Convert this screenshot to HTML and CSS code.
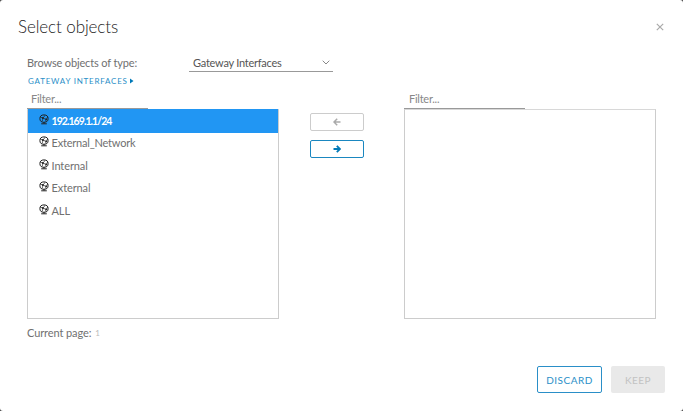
FILE: index.html
```html
<!DOCTYPE html>
<html lang="en">
<head>
<meta charset="utf-8">
<title>Select objects</title>
<link rel="stylesheet" href="styles.css">
</head>
<body>
<svg class="defs" aria-hidden="true">
  <symbol id="net" viewBox="0 0 10 11">
    <ellipse cx="5" cy="4.6" rx="4.1" ry="3.7" fill="none" stroke="currentColor" stroke-width="1"/>
    <path d="M1.2 3L4 4.2 6 1.4M4 4.2L3.2 7.4M4 4.2L7.4 5.4 8.6 3M7.4 5.4L6.2 7.6" fill="none" stroke="currentColor" stroke-width=".7"/>
    <circle cx="3.8" cy="4" r=".9" fill="currentColor"/><circle cx="7.2" cy="5.3" r=".9" fill="currentColor"/>
    <path d="M2.2 9.8h5.6" stroke="currentColor" stroke-width="1"/><path d="M5 8.2v1.4" stroke="currentColor" stroke-width="1"/>
  </symbol>
</svg>
<main class="dialog">
  <header class="header">
    <h1 class="title">Select objects</h1>
    <button class="close" aria-label="Close"><svg width="8" height="8" viewBox="0 0 8 8"><path d="M.8.8l6.4 6.4M7.2.8L.8 7.2" stroke="#aaa" stroke-width="1.2"/></svg></button>
  </header>
  <div class="browse">
    <span class="label">Browse objects of type:</span>
    <div class="select"><span class="value">Gateway Interfaces</span><svg width="8" height="5" viewBox="0 0 8 5"><path d="M.7.7L4 4 7.3.7" fill="none" stroke="#888" stroke-width="1"/></svg></div>
  </div>
  <div class="crumb"><span>GATEWAY INTERFACES</span><svg width="4" height="6" viewBox="0 0 4 6"><path d="M0 .5L3.5 3 0 5.5z" fill="#0079b8"/></svg></div>
  <div class="picker">
    <section class="column">
      <div class="filter">Filter...</div>
      <ul class="list">
        <li class="item selected"><svg class="net"><use href="#net"/></svg><span class="address">192.169.1.1/24</span></li>
        <li class="item"><svg class="net"><use href="#net"/></svg><span class="wide">External_Network</span></li>
        <li class="item"><svg class="net"><use href="#net"/></svg><span>Internal</span></li>
        <li class="item"><svg class="net"><use href="#net"/></svg><span>External</span></li>
        <li class="item"><svg class="net"><use href="#net"/></svg><span>ALL</span></li>
      </ul>
    </section>
    <div class="moves">
      <button class="move off" aria-label="Remove"><svg width="8" height="8" viewBox="0 0 8 8"><path d="M7.5 4H1.2M4.2.8L1 4l3.2 3.2" fill="none" stroke="currentColor" stroke-width="1.5"/></svg></button>
      <button class="move" aria-label="Add"><svg width="8" height="8" viewBox="0 0 8 8"><path d="M.5 4h6.3M3.8.8L7 4 3.8 7.2" fill="none" stroke="currentColor" stroke-width="1.8"/></svg></button>
    </div>
    <section class="column">
      <div class="filter">Filter...</div>
      <ul class="list"></ul>
    </section>
  </div>
  <div class="page"><span>Current page:</span><span class="num">1</span></div>
  <footer class="footer">
    <button class="btn discard">DISCARD</button>
    <button class="btn keep" disabled>KEEP</button>
  </footer>
</main>
</body>
</html>
```
FILE: styles.css
```css
* { box-sizing: border-box; }
body { margin: 0; background: #444; font: 11px/16px Lato, "Liberation Sans", sans-serif; color: #707070; overflow: hidden; }
button { font: inherit; padding: 0; margin: 0; background: none; border: 0; }
svg { display: block; flex: none; }
.defs { position: absolute; width: 0; height: 0; }
.dialog { width: 683px; height: 411px; background: #fff; border-radius: 3px; padding: 15px 18px 0; display: flex; flex-direction: column; }
.header { display: flex; justify-content: space-between; align-items: center; height: 24px; padding-right: 1px; }
.title { margin: 0; font-size: 17px; line-height: 22px; font-weight: 300; letter-spacing: -.1px; color: #222; }
.close { width: 8px; height: 8px; }
.browse { display: flex; height: 19px; margin: 14px 0 0 9px; }
.label { width: 162px; line-height: 19px; letter-spacing: -.15px; }
.select { width: 144px; height: 19px; border-bottom: 1px solid #999; display: flex; align-items: center; justify-content: space-between; padding: 1px 3px 0 4px; color: #555; }
.value { letter-spacing: -.25px; }
.crumb { display: flex; align-items: center; gap: 2px; height: 14px; margin: 2px 0 0 10px; font-size: 8px; letter-spacing: .77px; color: #2a8fc8; }
.crumb span { line-height: 12px; }
.picker { display: flex; margin: 2px 0 0 9px; }
.column { width: 252px; }
.filter { width: 121px; height: 19px; line-height: 17px; padding-left: 4px; border-bottom: 1px solid #999; color: #888; letter-spacing: -.25px; }
.moves + .column .filter { padding-left: 5px; }
.list { list-style: none; margin: 0; padding: 0; width: 252px; height: 210px; border: 1px solid #ccc; border-top-color: #d8d8d8; }
.item { display: flex; align-items: center; height: 22.5px; padding: 0 0 1px 11px; gap: 2.5px; color: #707070; letter-spacing: -.1px; }
.wide { letter-spacing: -.2px; }
.net { width: 10px; height: 11px; color: #222; margin-top: -3px; }
.selected { background: #2196f3; color: #fff; font-weight: 700; box-shadow: 0 -1px #2196f3; }
.address { font-size: 10.5px; letter-spacing: -.95px; }
.moves { width: 125px; padding: 23px 0 0 31px; display: flex; flex-direction: column; gap: 9px; }
.move { width: 54px; height: 18px; border: 1px solid #1a87c0; border-radius: 2px; color: #0079b8; display: flex; align-items: center; justify-content: center; }
.off { border-color: #ccc; color: #aaa; }
.page { margin: 6px 0 0 9px; display: flex; gap: 4px; letter-spacing: -.1px; }
.num { color: #bbb; font-size: 8px; line-height: 17px; }
.footer { display: flex; justify-content: flex-end; gap: 9px; margin-top: 24px; }
.btn { height: 27px; border-radius: 2px; font-size: 10px; letter-spacing: .5px; }
.discard { width: 65px; border: 1px solid #2a8fc8; color: #2a8fc8; }
.keep { width: 54px; background: #e9e9e9; color: #c2c2c2; }
```
